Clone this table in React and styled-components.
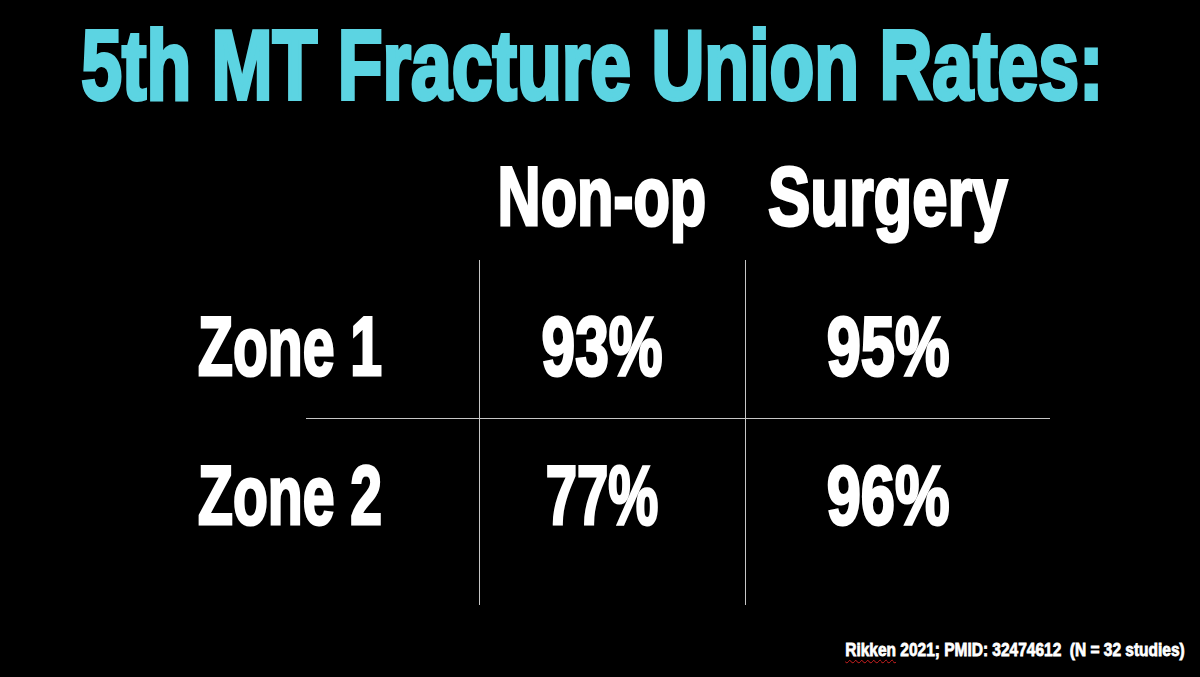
import React from "react";
import styled, { createGlobalStyle } from "styled-components";

const GlobalStyle = createGlobalStyle`
  html, body { margin: 0; padding: 0; background: #000; }
  body { font-family: "Liberation Sans", Arial, sans-serif; }
  * { box-sizing: border-box; }
`;

const Slide = styled.div`
  width: 1200px;
  height: 677px;
  overflow: hidden;
  background: #000;
  display: flex;
  flex-direction: column;
  font-family: "Liberation Sans", Arial, sans-serif;
  font-weight: 700;
`;

const Condensed = styled.span`
  display: inline-block;
  flex-shrink: 0;
  white-space: pre;
  transform: scaleX(${(p) => p.$sx || 0.72});
  transform-origin: ${(p) => p.$origin || "center"} center;
  -webkit-text-stroke: ${(p) => p.$stroke ?? 3}px currentColor;
`;

const Title = styled.h1`
  margin: 0;
  padding: 16px 16px 0 0;
  display: flex;
  justify-content: center;
  font-size: 98px;
  line-height: 98px;
  font-weight: 700;
  color: #5cd4e2;
`;

const Table = styled.div`
  margin: 40px 0 0 198px;
  display: grid;
  grid-template-columns: 281px 266px 305px;
  color: #fff;
`;

const HeadCell = styled.div`
  height: 106px;
  display: flex;
  justify-content: center;
  padding-right: 20px;
  font-size: 84px;
  line-height: 84px;
`;

const Cell = styled.div`
  height: ${(p) => p.$h}px;
  padding-top: ${(p) => p.$pt}px;
  font-size: 84px;
  line-height: 84px;
  display: flex;
  border-top: ${(p) => (p.$rule ? "1px solid #c6c6c6" : "0")};
`;

const LabelCell = styled(Cell)`
  position: relative;
  justify-content: flex-start;
  border-top-color: transparent;
  &::before {
    content: ${(p) => (p.$rule ? '""' : "none")};
    position: absolute;
    top: -1px;
    left: 108px;
    right: 0;
    height: 1px;
    background: #c6c6c6;
  }
`;

const ValueCell = styled(Cell)`
  justify-content: center;
  padding-right: 20px;
  border-left: 1px solid #c6c6c6;
`;

const Footer = styled.div`
  margin-top: 36px;
  padding-right: 15px;
  display: flex;
  justify-content: flex-end;
  font-size: 18px;
  line-height: 18px;
  color: #fff;
`;

const Spell = styled.span`
  text-decoration: underline wavy #d02020;
  text-decoration-thickness: 1px;
  text-underline-offset: 3px;
`;

const rows = [
  { label: "Zone 1", nonop: "93%", surgery: "95%", h: 158, pt: 44, rule: false },
  { label: "Zone 2", nonop: "77%", surgery: "96%", h: 187, pt: 34, rule: true },
];

export default function App() {
  return (
    <>
      <GlobalStyle />
      <Slide>
        <Title>
          <Condensed $sx={0.748} $stroke={4}>5th MT Fracture Union Rates:</Condensed>
        </Title>
        <Table>
          <HeadCell />
          <HeadCell>
            <Condensed $sx={0.71}>Non-op</Condensed>
          </HeadCell>
          <HeadCell>
            <Condensed $sx={0.755}>Surgery</Condensed>
          </HeadCell>
          {rows.map((r) => (
            <React.Fragment key={r.label}>
              <LabelCell $h={r.h} $pt={r.pt} $rule={r.rule}>
                <Condensed $sx={0.68} $origin="left">{r.label}</Condensed>
              </LabelCell>
              <ValueCell $h={r.h} $pt={r.pt} $rule={r.rule}>
                <Condensed $sx={r.nonop === "77%" ? 0.67 : 0.72}>{r.nonop}</Condensed>
              </ValueCell>
              <ValueCell $h={r.h} $pt={r.pt} $rule={r.rule}>
                <Condensed $sx={0.73}>{r.surgery}</Condensed>
              </ValueCell>
            </React.Fragment>
          ))}
        </Table>
        <Footer>
          <Condensed $sx={0.86} $origin="right" $stroke={0.8}>
            <Spell>Rikken</Spell>{" 2021; PMID: 32474612  (N = 32 studies)"}
          </Condensed>
        </Footer>
      </Slide>
    </>
  );
}
